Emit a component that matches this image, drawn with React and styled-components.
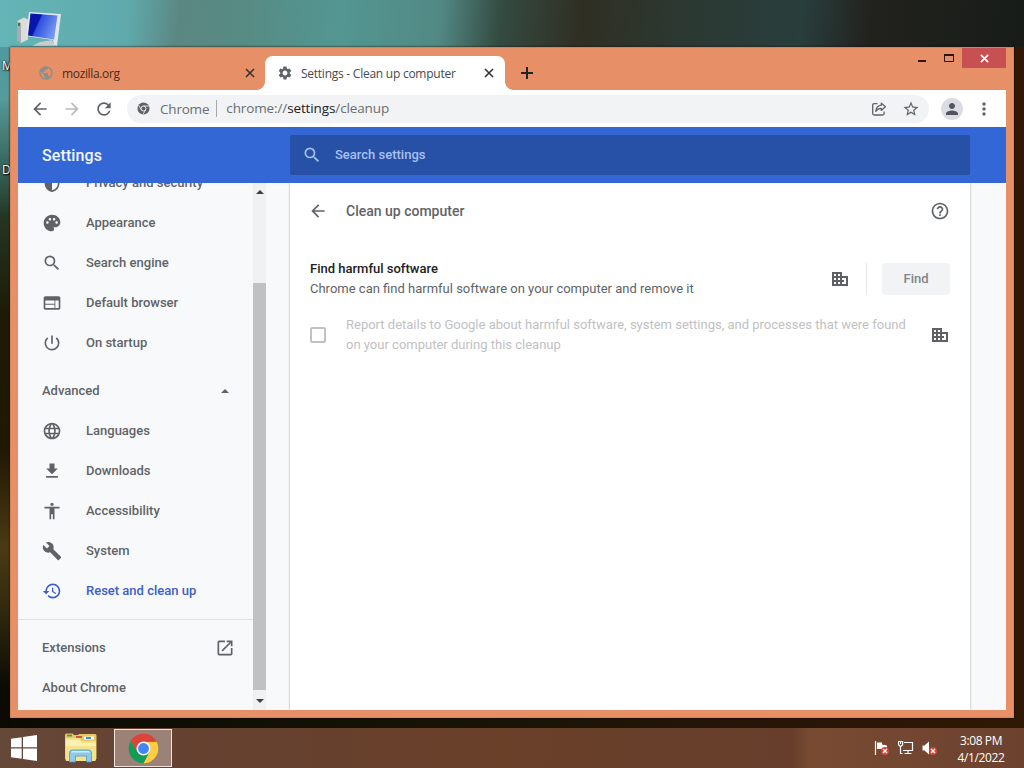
import styled, { createGlobalStyle, css } from "styled-components"
import {
  MdArrowBack, MdArrowForward, MdRefresh, MdStarBorder, MdMoreVert, MdPerson,
  MdSettings, MdSearch, MdPalette, MdWeb, MdPowerSettingsNew, MdLanguage,
  MdBuild, MdRestore, MdOpenInNew, MdHelpOutline, MdPublic,
} from "react-icons/md"



const DownloadIcon = () => (
  <svg viewBox="0 0 24 24" width="20" height="20" fill="currentColor">
    <path d="M19 9h-4V3H9v6H5l7 7 7-7zM5 18v2h14v-2H5z" />
  </svg>
)

const AccessibilityIcon = () => (
  <svg viewBox="0 0 24 24" width="20" height="20" fill="currentColor">
    <path d="M12 2c1.1 0 2 .9 2 2s-.9 2-2 2-2-.9-2-2 .9-2 2-2zm9 7h-6v13h-2v-6h-2v6H9V9H3V7h18v2z" />
  </svg>
)

const ShieldIcon = () => (
  <svg viewBox="0 0 24 24" width="20" height="20">
    <path d="M12 2 4 5v7c0 5 3.500 8.500 8 10 4.500-1.500 8-5 8-10V5z" fill="none" stroke="currentColor" strokeWidth="2" />
    <path d="M4 12h8v10c-4.500-1.500-7.700-5.500-8-10zM4 5l8-3v10H4z" fill="currentColor" />
  </svg>
)

const BuildingIcon = () => (
  <svg viewBox="0 0 16 14" width="16" height="14" shapeRendering="crispEdges">
    <path d="M0 0h10v4h6v10H0z" fill="#5f6063" />
    <path d="M2 2h2v2H2zM6 2h2v2H6zM2 6h2v2H2zM6 6h2v2H6zM2 10h2v2H2zM6 10h2v2H6zM10 6h4v6h-4z" fill="#fff" />
    <path d="M10 8h2v2h-2z" fill="#5f6063" />
  </svg>
)

const ShareIcon = () => (
  <svg viewBox="0 0 16 16" width="16" height="16" fill="none" stroke="#5f6368" strokeWidth="1.300" strokeLinejoin="round">
    <path d="M6.500 2.600H3.200Q1.700 2.600 1.700 4.100v8.400Q1.700 14 3.200 14h8.400q1.500 0 1.500-1.500v-2" />
    <path d="M10.300 2.200 14.400 5.800l-4.100 3.600V7.300C7.800 7.300 6 8.200 4.700 10.300c.4-3.500 2.300-5.700 5.600-6.100z" />
  </svg>
)

const ChromeMono = () => (
  <svg viewBox="0 0 14 14" width="13" height="13">
    <circle cx="7" cy="7" r="6.500" fill="#5f6368" />
    <circle cx="7" cy="7" r="2.700" fill="none" stroke="#f1f3f4" strokeWidth="1" />
    <path d="M7 4.300h5.800M4.700 8.400 1.700 3.400M9.300 8.400l-2.900 5" stroke="#f1f3f4" strokeWidth=".9" />
  </svg>
)

const ChromeLogo = () => (
  <svg viewBox="0 0 48 48" width="31" height="31">
    <path d="M24 13.500h20.400A23 23 0 0 1 24 47l9.100-17.700z" fill="#ffcd40" />
    <path d="M14.900 29.300 4.100 12.500A23 23 0 0 0 24 47l9.100-17.700z" fill="#0f9d58" />
    <path d="M14.900 29.300 4.100 12.500A23 23 0 0 1 44.400 13.500H24z" fill="#db4437" />
    <circle cx="24" cy="24" r="10.800" fill="#f4f4f4" />
    <circle cx="24" cy="24" r="8.400" fill="#4285f4" />
  </svg>
)

const WindowsLogo = () => (
  <svg viewBox="0 0 26 26" width="26" height="26" fill="#fff">
    <path d="M0 3.800 10.700 2.200V12.300H0zM12 2 26 0v12.300H12zM0 13.600h10.700v10.200L0 22.200zM12 13.600h14V26l-14-2z" />
  </svg>
)

const ExplorerIcon = () => (
  <svg viewBox="0 0 34 32" width="34" height="32">
    <path d="M1 3q0-1.500 1.500-1.500h6L10 3h4l1-1h16q1.500 0 1.500 1.500V27H1z" fill="#e8c765" />
    <path d="M3 2.500h5v2H3z" fill="#4a9a54" />
    <path d="M12 4h6v2h-6z" fill="#c65a42" />
    <path d="M20 4.500h10v3H20z" fill="#f8f8ef" />
    <path d="M22 5h5v2h-5z" fill="#3d8dc9" />
    <path d="M1.500 6H15l3 3h14v18.500q0 1.500-1.500 1.500H3q-1.500 0-1.500-1.500z" fill="#f5e28c" />
    <path d="M2 8h13l3 3h14v3H2z" fill="#fbf0b0" />
    <path d="M5.500 30V21q0-3 3-3h16q3 0 3 3v9h-5v-6h-11v6z" fill="#8ccbed" stroke="#4b9bcc" strokeWidth=".8" />
    <path d="M7 20.500q.5-1.500 2-1.500h15q1.500 0 2 1.500z" fill="#d5effb" />
  </svg>
)

const ComputerIcon = () => (
  <svg viewBox="0 0 46 36" width="46" height="36">
    <defs>
      <linearGradient id="screen" x1="0" y1="0" x2="1" y2="0.400">
        <stop offset="0" stopColor="#0a16b4" />
        <stop offset=".4" stopColor="#0715a8" />
        <stop offset=".45" stopColor="#2e50df" />
        <stop offset="1" stopColor="#7396ee" />
      </linearGradient>
    </defs>
    <path d="M1 9 8 5.500l4 2v20L5 31l-4-3z" fill="#dcdcda" />
    <path d="M1 9 5 11v20l-4-3z" fill="#a9adb0" />
    <path d="M2 11h2v3H2z" fill="#3d7c3f" />
    <path d="m16 34 8-4 12-2 3 6z" fill="#c7cccd" />
    <path d="M13 0 45 2l-4 32-3-1-1-5-27-4z" fill="#dfe6ee" />
    <path d="m14.500 1.500 27 2-3.500 24-26-4z" fill="url(#screen)" />
  </svg>
)

const FlagIcon = () => (
  <svg viewBox="0 0 16 16" width="16" height="16">
    <path d="M1.500 1v14" stroke="#fff" strokeWidth="1.200" />
    <path d="M3 2.500h5v2l5 1V9H3z" fill="#fff" />
    <circle cx="11" cy="11" r="4" fill="#d9433b" />
    <path d="m9 9 4 4m0-4-4 4" stroke="#fff" strokeWidth="1.300" />
  </svg>
)

const NetworkIcon = () => (
  <svg viewBox="0 0 16 16" width="16" height="16" fill="none" stroke="#fff" strokeWidth="1.200">
    <path d="M6 2.500h8.500v8H5M10 10.500v3M6.500 13.500h7M2.500 6v7.500h2" />
    <path d="M.6 1.500h4V4q0 2-2 2t-2-2z" fill="#59382a" />
    <path d="M2.600 2v2" />
  </svg>
)

const SoundIcon = () => (
  <svg viewBox="0 0 16 16" width="16" height="16">
    <path d="M.5 5.500H3v5H.5zM3 5l4-3.500v13L3 11z" fill="#fff" />
    <circle cx="11" cy="11" r="4" fill="#d9433b" />
    <path d="m9 9 4 4m0-4-4 4" stroke="#fff" strokeWidth="1.300" />
  </svg>
)

const Cross = ({ size = 10, color = "#333", width = 1.6 }) => (
  <svg viewBox="0 0 10 10" width={size} height={size}>
    <path d="M1 1l8 8M9 1 1 9" stroke={color} strokeWidth={width} />
  </svg>
)

const Caret = ({ down, width = 8 }) => (
  <svg viewBox="0 0 8 4" width={width} height={width / 2} fill="currentColor">
    <path d={down ? "M0 0h8L4 4z" : "M0 4h8L4 0z"} />
  </svg>
)

const basic = [
  { label: "Privacy and security", icon: <ShieldIcon /> },
  { label: "Appearance", icon: <MdPalette /> },
  { label: "Search engine", icon: <MdSearch /> },
  { label: "Default browser", icon: <MdWeb /> },
  { label: "On startup", icon: <MdPowerSettingsNew /> },
]

const advanced = [
  { label: "Languages", icon: <MdLanguage /> },
  { label: "Downloads", icon: <DownloadIcon /> },
  { label: "Accessibility", icon: <AccessibilityIcon /> },
  { label: "System", icon: <MdBuild /> },
  { label: "Reset and clean up", icon: <MdRestore />, active: true },
]

const App = () => {
  return (
    <Desktop>
      <GlobalStyle />
      <DesktopIcon><ComputerIcon /></DesktopIcon>
      <DesktopLabel $top={57}>M</DesktopLabel>
      <DesktopLabel $top={161}>D</DesktopLabel>

      <Window>
        <TabStrip>
          <Tab>
            <MdPublic size={16} color="#8a8f8d" />
            <TabTitle>mozilla.org</TabTitle>
            <Cross />
          </Tab>
          <Tab $active>
            <MdSettings size={16} color="#5f6368" />
            <TabTitle $tight>Settings - Clean up computer</TabTitle>
            <Cross />
          </Tab>
          <NewTab>
            <svg viewBox="0 0 12 12" width="12" height="12">
              <path d="M6 0v12M0 6h12" stroke="#222" strokeWidth="2" />
            </svg>
          </NewTab>
          <Controls>
            <svg viewBox="0 0 8 2" width="8" height="2"><path d="M0 0h8v2H0z" fill="#2b1409" /></svg>
            <svg viewBox="0 0 10 8" width="10" height="8">
              <path d="M.5 1h9v6.500h-9z" fill="none" stroke="#2b1409" />
              <path d="M0 0h10v2H0z" fill="#2b1409" />
            </svg>
            <CloseButton><Cross size={9} color="#fff" width={1.9} /></CloseButton>
          </Controls>
        </TabStrip>

        <Toolbar>
          <ToolIcon><MdArrowBack /></ToolIcon>
          <ToolIcon $dim><MdArrowForward /></ToolIcon>
          <ToolIcon><MdRefresh /></ToolIcon>
          <Omnibox>
            <ChromeMono />
            <Origin>Chrome</Origin>
            <Url>chrome://<b>settings</b>/cleanup</Url>
            <ShareIcon />
            <MdStarBorder size={18} color="#5f6368" />
          </Omnibox>
          <Avatar><MdPerson size={18} /></Avatar>
          <MdMoreVert size={20} color="#5f6368" />
        </Toolbar>

        <Header>
          <Brand>Settings</Brand>
          <Search>
            <MdSearch size={20} />
            <span>Search settings</span>
          </Search>
        </Header>

        <Body>
          <Sidebar>
            {basic.map((item) => (
              <Item key={item.label}><ItemIcon>{item.icon}</ItemIcon>{item.label}</Item>
            ))}
            <Toggle>Advanced<Caret /></Toggle>
            {advanced.map((item) => (
              <Item key={item.label} $active={item.active}><ItemIcon>{item.icon}</ItemIcon>{item.label}</Item>
            ))}
            <Divider />
            <FooterLink>Extensions<MdOpenInNew size={20} /></FooterLink>
            <FooterLink>About Chrome</FooterLink>
          </Sidebar>
          <Scrollbar>
            <ScrollArrow><Caret /></ScrollArrow>
            <Thumb />
            <ScrollArrow><Caret down /></ScrollArrow>
          </Scrollbar>

          <Card>
            <CardHeader>
              <MdArrowBack size={20} />
              <h1>Clean up computer</h1>
              <MdHelpOutline size={20} />
            </CardHeader>
            <FindRow>
              <FindText>
                <strong>Find harmful software</strong>
                <p>Chrome can find harmful software on your computer and remove it</p>
              </FindText>
              <BuildingIcon />
              <FindAction>
                <FindButton>Find</FindButton>
              </FindAction>
            </FindRow>
            <ReportRow>
              <Checkbox />
              <p>Report details to Google about harmful software, system settings, and processes that were found on your computer during this cleanup</p>
              <BuildingIcon />
            </ReportRow>
          </Card>
        </Body>
      </Window>

      <Taskbar>
        <StartButton><WindowsLogo /></StartButton>
        <TaskButton><ExplorerIcon /></TaskButton>
        <TaskButton $open><ChromeLogo /></TaskButton>
        <Tray>
          <FlagIcon />
          <NetworkIcon />
          <SoundIcon />
        </Tray>
        <Clock>
          <span>3:08 PM</span>
          <span>4/1/2022</span>
        </Clock>
      </Taskbar>
    </Desktop>
  )
}

export default App


const GlobalStyle = createGlobalStyle`
* { box-sizing: border-box; }
body {
  margin: 0;
  overflow: hidden;
}
h1, p { margin: 0; }
svg {
  display: block;
  flex-shrink: 0;
}
`

const segoe = css`
font-family: "Open Sans", "Noto Sans", sans-serif;
`

const Desktop = styled.div`
position: relative;
display: flex;
flex-direction: column;
justify-content: flex-end;
width: 1024px;
height: 768px;
overflow: hidden;
background:
  linear-gradient(95deg, #64b5b7 0, #5fa9ab 130px, #5b8782 180px, #578b83 240px, #539692 340px, #528984 440px, #344b41 500px, #302f23 580px, #2b3932 690px, #293e3d 800px, #22221d 870px, #171c18 1024px) 0 0 / 1024px 47px no-repeat,
  linear-gradient(180deg, #4d9aa0 0, #569b9b 50px, #3b6d66 110px, #243623 170px, #1d1a05 270px, #201803 400px, #4a3a14 500px, #332b10 560px, #0b0b03 640px, #0a0802 720px) 0 47px / 10px 690px no-repeat,
  linear-gradient(90deg, #0b0b04, #181506 500px, #281509 760px, #301904 1024px);
`

const DesktopIcon = styled.div`
position: absolute;
left: 16px;
top: 12px;
`

const DesktopLabel = styled.span`
${segoe}
position: absolute;
left: 2px;
top: ${(p) => p.$top}px;
color: #fff;
font-size: 12px;
line-height: 17px;
text-shadow: 1px 1px 2px #000, 0 0 2px #000;
`

const Window = styled.main`
position: absolute;
left: 10px;
top: 47px;
width: 1004px;
height: 671px;
display: flex;
flex-direction: column;
padding: 0 8px 8px;
background: #e79067;
box-shadow: inset 0 0 0 1px #d98258, 0 0 2px #1a0d05;
`

const TabStrip = styled.div`
${segoe}
display: flex;
height: 43px;
padding: 9px 0 0 7px;
`

const Tab = styled.div`
position: relative;
display: flex;
align-items: center;
width: 240px;
height: 34px;
padding: 0 11px 0 12px;
font-size: 12px;
color: #4a2b1c;
&:first-child { padding: 0 10px 0 13px; }
${(p) => p.$active && css`
  background: #fff;
  border-radius: 8px 8px 0 0;
  color: #45494d;
  &::before, &::after {
    content: "";
    position: absolute;
    bottom: 0;
    width: 8px;
    height: 8px;
  }
  &::before {
    left: -8px;
    background: radial-gradient(circle at 0 0, transparent 7.5px, #fff 8px);
  }
  &::after {
    right: -8px;
    background: radial-gradient(circle at 100% 0, transparent 7.5px, #fff 8px);
  }
`}
`

const TabTitle = styled.span`
flex: 1;
margin-left: 8px;
white-space: nowrap;
letter-spacing: ${(p) => (p.$tight ? "-.25px" : "-.35px")};
`

const NewTab = styled.div`
padding: 11px 16px;
`

const Controls = styled.div`
display: flex;
align-items: center;
gap: 18px;
height: 20px;
margin: -8px 0 0 auto;
& > :nth-child(1) { margin-top: 5px; }
& > :nth-child(3) { margin-left: -10px; }
`

const CloseButton = styled.div`
display: grid;
place-items: center;
width: 44px;
height: 20px;
background: #c75050;
`

const Toolbar = styled.div`
display: flex;
align-items: center;
height: 37px;
padding: 0 12px;
background: #fff;
`

const ToolIcon = styled.div`
display: grid;
place-items: center;
width: 20px;
margin-right: 12px;
font-size: 20px;
color: ${(p) => (p.$dim ? "#b9bbbe" : "#5f6368")};
`

const Omnibox = styled.div`
${segoe}
display: flex;
align-items: center;
width: 803px;
height: 28px;
margin-left: 1px;
padding: 0 9px 0 10px;
border-radius: 14px;
background: #f1f3f4;
font-size: 13.5px;
color: #6a6e73;
& > :nth-child(5) { margin-left: 15px; }
`

const Origin = styled.span`
margin: 0 7px 0 10px;
letter-spacing: -.2px;
`

const Url = styled.span`
flex: 1;
padding-left: 9px;
border-left: 1px solid #a5a8ab;
line-height: 17px;
letter-spacing: -.12px;
b {
  font-weight: 400;
  color: #202124;
}
`

const Avatar = styled.div`
display: grid;
place-items: center;
width: 22px;
height: 22px;
margin: 0 11px 0 12px;
border-radius: 50%;
background: #dadce5;
color: #50545f;
`

const Header = styled.header`
display: flex;
align-items: center;
height: 56px;
flex-shrink: 0;
padding-left: 24px;
background: #3367d6;
font-family: Roboto, sans-serif;
`

const Brand = styled.div`
width: 248px;
font-size: 16px;
font-weight: 500;
letter-spacing: .1px;
color: #f1f5fd;
`

const Search = styled.div`
display: flex;
align-items: center;
gap: 13px;
width: 680px;
height: 40px;
padding: 0 0 1px 12px;
border-radius: 2px;
background: #2750a7;
color: #a9c1ef;
font-size: 13px;
font-weight: 500;
`

const Body = styled.div`
display: flex;
flex: 1;
min-height: 0;
background: #f8f9fa;
font-family: Roboto, sans-serif;
font-size: 13px;
color: #5f6368;
`

const Sidebar = styled.nav`
width: 235px;
overflow: hidden;
font-weight: 500;
`

const row = css`
display: flex;
align-items: center;
height: 40px;
padding: 0 18px 1px 24px;
`

const Item = styled.div`
${row}
color: ${(p) => (p.$active ? "#3b5fc9" : "#5f6368")};
&:first-child { margin-top: -20px; }
`

const ItemIcon = styled.span`
width: 44px;
font-size: 20px;
`

const Toggle = styled.div`
${row}
justify-content: space-between;
margin-top: 8px;
padding-right: 24px;
`

const Divider = styled.div`
height: 1px;
margin: 8px 0;
background: #dfe1e4;
`

const FooterLink = styled.div`
${row}
justify-content: space-between;
`

const Scrollbar = styled.div`
display: flex;
flex-direction: column;
width: 13px;
background: #f1f1f1;
color: #404040;
`

const ScrollArrow = styled.div`
display: grid;
place-items: center;
height: 18px;
&:last-child {
  height: 20px;
  padding-top: 2px;
}
`

const Thumb = styled.div`
height: 407px;
margin-top: auto;
background: #c1c1c1;
`

const Card = styled.section`
width: 680px;
margin-left: 24px;
background: #fff;
box-shadow: 0 0 2px rgba(60, 64, 67, .5);
clip-path: inset(0 -3px 0 -3px);
`

const CardHeader = styled.div`
display: flex;
align-items: center;
height: 57px;
padding: 0 20px 1px 18px;
h1 {
  flex: 1;
  margin-left: 18px;
  font-size: 14px;
  font-weight: 500;
}
`

const FindRow = styled.div`
display: flex;
align-items: center;
height: 78px;
padding: 0 20px;
`

const FindText = styled.div`
flex: 1;
line-height: 20px;
strong {
  font-weight: 500;
  color: #202124;
}
`

const FindAction = styled.div`
margin-left: 18px;
padding-left: 15px;
border-left: 1px solid #e3e5e8;
`

const FindButton = styled.div`
display: grid;
place-items: center;
width: 68px;
height: 32px;
padding-bottom: 1px;
border-radius: 4px;
background: #f1f3f4;
color: #80868b;
font-weight: 500;
`

const ReportRow = styled.div`
display: flex;
align-items: center;
height: 34px;
padding: 0 22px 0 20px;
p {
  width: 566px;
  margin: 0 auto 0 20px;
  line-height: 20px;
  color: #bfc1c3;
}
`

const Checkbox = styled.span`
width: 16px;
height: 16px;
border: 2px solid #bfc1c3;
border-radius: 2px;
`

const Taskbar = styled.footer`
${segoe}
position: relative;
display: flex;
align-items: center;
height: 40px;
background: linear-gradient(90deg, #654839, #654131 180px, #6a4029 500px, #663e2b 790px, #784a32 810px, #6c422f 1024px);
color: #fff;
`

const StartButton = styled.div`
width: 52px;
padding-left: 11px;
`

const TaskButton = styled.div`
display: grid;
place-items: center;
width: ${(p) => (p.$open ? 58 : 57)}px;
height: 38px;
margin-right: ${(p) => (p.$open ? 0 : 5)}px;
${(p) => p.$open && css`
  border: 1px solid #eee3dc;
  background: #9b8176;
`}
`

const Tray = styled.div`
display: flex;
gap: 8px;
margin-left: auto;
`

const Clock = styled.div`
display: flex;
flex-direction: column;
align-items: center;
width: 86px;
padding-top: 2px;
font-size: 12px;
line-height: 17px;
letter-spacing: -.4px;
`
